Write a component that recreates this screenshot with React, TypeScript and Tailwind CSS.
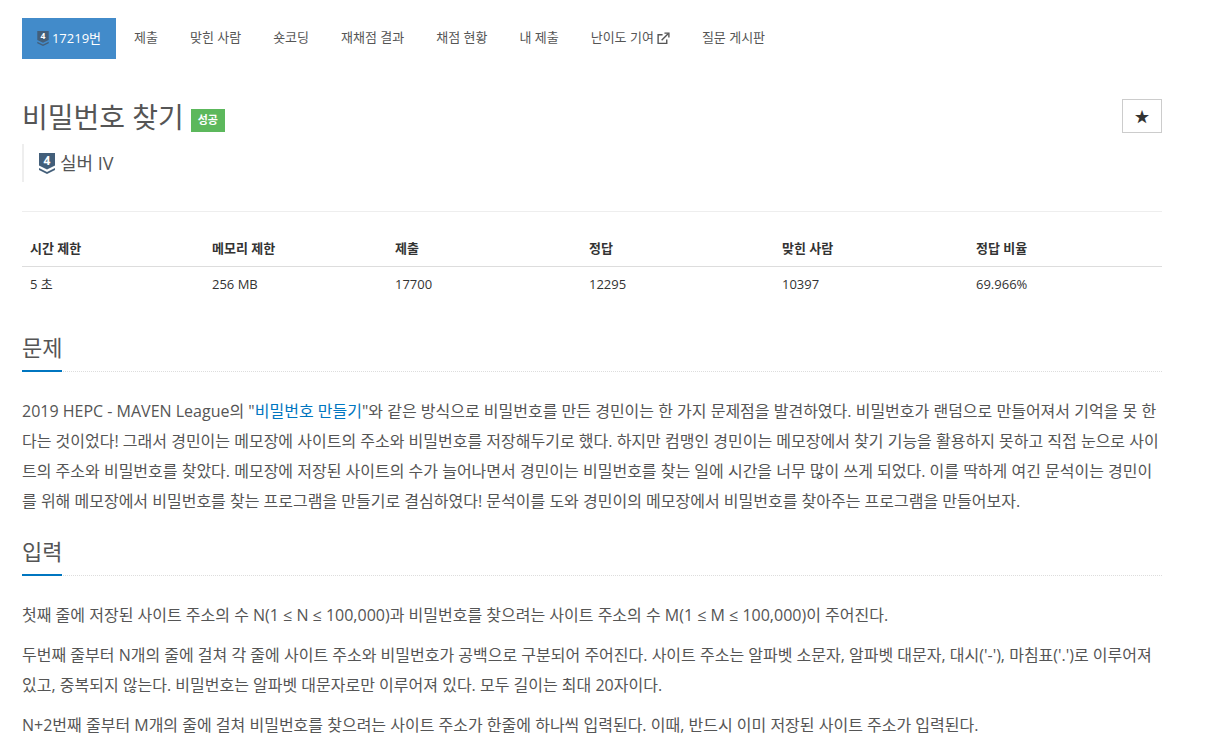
import React from 'react';

const navItems = ['제출', '맞힌 사람', '숏코딩', '재채점 결과', '채점 현황', '내 제출'];
const columns = [
  { label: '시간 제한', value: '5 초', width: 'w-[182px]' },
  { label: '메모리 제한', value: '256 MB', width: 'w-[183px]' },
  { label: '제출', value: '17700', width: 'w-[194px]' },
  { label: '정답', value: '12295', width: 'w-[193px]' },
  { label: '맞힌 사람', value: '10397', width: 'w-[194px]' },
  { label: '정답 비율', value: '69.966%', width: 'flex-1' },
];

function TierIcon({ className }: { className: string }) {
  return (
    <svg viewBox="0 0 16 21" className={className}>
      <path d="M0 0H16V12.5L8 16.5L0 12.5Z" fill="#435f7a" />
      <path d="M0 15L8 19L16 15V17L8 21L0 17Z" fill="#435f7a" />
      <text x="8" y="11.5" textAnchor="middle" fontSize="12" fontWeight="700" fill="#fff" fontFamily="'Open Sans', sans-serif">
        4
      </text>
    </svg>
  );
}

function SectionTitle({ children }: { children: React.ReactNode }) {
  return (
    <div className="h-[38px] border-b border-dotted border-[#dddddd]">
      <h2 className="inline-block h-[38px] w-[40px] border-b-[2px] border-[#0076c0] text-[22px] leading-[26px] font-normal whitespace-nowrap text-[#555555]">
        {children}
      </h2>
    </div>
  );
}

export default function App() {
  return (
    <div className="h-[756px] w-[1206px] overflow-hidden bg-white pt-[18px] pr-[44px] pl-[22px] font-['Open_Sans','Noto_Sans_CJK_KR',sans-serif] text-[#333333]">
      {/* Tabs */}
      <nav className="flex h-[41px] items-center text-[13px] text-[#555555]">
        <a className="mr-[2px] flex h-[41px] w-[94px] items-center justify-center gap-[3px] bg-[#428bca] whitespace-nowrap text-white">
          <TierIcon className="h-[15px] w-[12px]" />
          17219번
        </a>
        {navItems.map((item) => (
          <a key={item} className="px-[16px] pb-[1px] whitespace-nowrap">
            {item}
          </a>
        ))}
        <a className="flex items-center gap-[3px] px-[16px] pb-[1px] whitespace-nowrap">
          난이도 기여
          <svg viewBox="0 0 14 14" className="h-[13px] w-[13px]" fill="none" stroke="#555555" strokeWidth="1.5">
            <path d="M10.5 8V12.2H1.2V3H6" />
            <path d="M5 9L12 2" />
            <path d="M8 1.2H12.8V6" />
          </svg>
        </a>
        <a className="px-[16px] pb-[1px] whitespace-nowrap">질문 게시판</a>
      </nav>

      {/* Title */}
      <div className="mt-[40px] flex items-start justify-between">
        <div className="mt-[1px] flex items-center">
          <h1 className="text-[28px] leading-[34px] font-normal text-[#555555]">비밀번호 찾기</h1>
          <span className="mt-[6px] ml-[7px] flex h-[23px] w-[34px] items-center justify-center bg-[#5cb85c] text-[11px] font-bold text-white">
            성공
          </span>
        </div>
        <button className="flex h-[34px] w-[40px] items-center justify-center border border-[#cccccc] text-[15px] text-[#333333]">
          ★
        </button>
      </div>

      <div className="mt-[10px] flex h-[38px] items-center border-l-[2px] border-[#eeeeee] pl-[15px] text-[18px] text-[#555555]">
        <TierIcon className="mr-[5px] h-[21px] w-[16px]" />
        실버 IV
      </div>

      <div className="mt-[29px] border-t border-[#eeeeee]" />

      {/* Stats */}
      <div className="mt-[19px] text-[13px]">
        <div className="flex h-[36px] items-center border-b-[1px] border-[#dddddd] font-bold text-[#333333]">
          {columns.map((c) => (
            <div key={c.label} className={`${c.width} pl-[8px]`}>
              {c.label}
            </div>
          ))}
        </div>
        <div className="flex h-[36px] items-center">
          {columns.map((c) => (
            <div key={c.label} className={`${c.width} pl-[8px]`}>
              {c.value}
            </div>
          ))}
        </div>
      </div>

      {/* Sections */}
      <section className="mt-[31px]">
        <SectionTitle>문제</SectionTitle>
        <p className="mt-[24px] text-[16px] leading-[30px] text-[#555555]">
          2019 HEPC - MAVEN League의 "<a className="text-[#0076c0]">비밀번호 만들기</a>"와 같은 방식으로 비밀번호를 만든 경민이는 한 가지 문제점을 발견하였다. 비밀번호가 랜덤으로 만들어져서 기억을 못 한다는 것이었다! 그래서 경민이는 메모장에 사이트의 주소와 비밀번호를 저장해두기로 했다. 하지만 컴맹인 경민이는 메모장에서 찾기 기능을 활용하지 못하고 직접 눈으로 사이트의 주소와 비밀번호를 찾았다. 메모장에 저장된 사이트의 수가 늘어나면서 경민이는 비밀번호를 찾는 일에 시간을 너무 많이 쓰게 되었다. 이를 딱하게 여긴 문석이는 경민이를 위해 메모장에서 비밀번호를 찾는 프로그램을 만들기로 결심하였다! 문석이를 도와 경민이의 메모장에서 비밀번호를 찾아주는 프로그램을 만들어보자.
        </p>
      </section>

      <section className="mt-[22px]">
        <SectionTitle>입력</SectionTitle>
        <div className="mt-[24px] flex flex-col gap-[10px] text-[16px] leading-[30px] text-[#555555]">
          <p>첫째 줄에 저장된 사이트 주소의 수 N(1 ≤ N ≤ 100,000)과 비밀번호를 찾으려는 사이트 주소의 수 M(1 ≤ M ≤ 100,000)이 주어진다.</p>
          <p>두번째 줄부터 N개의 줄에 걸쳐 각 줄에 사이트 주소와 비밀번호가 공백으로 구분되어 주어진다. 사이트 주소는 알파벳 소문자, 알파벳 대문자, 대시('-'), 마침표('.')로 이루어져 있고, 중복되지 않는다. 비밀번호는 알파벳 대문자로만 이루어져 있다. 모두 길이는 최대 20자이다.</p>
          <p>N+2번째 줄부터 M개의 줄에 걸쳐 비밀번호를 찾으려는 사이트 주소가 한줄에 하나씩 입력된다. 이때, 반드시 이미 저장된 사이트 주소가 입력된다.</p>
        </div>
      </section>
    </div>
  );
}
